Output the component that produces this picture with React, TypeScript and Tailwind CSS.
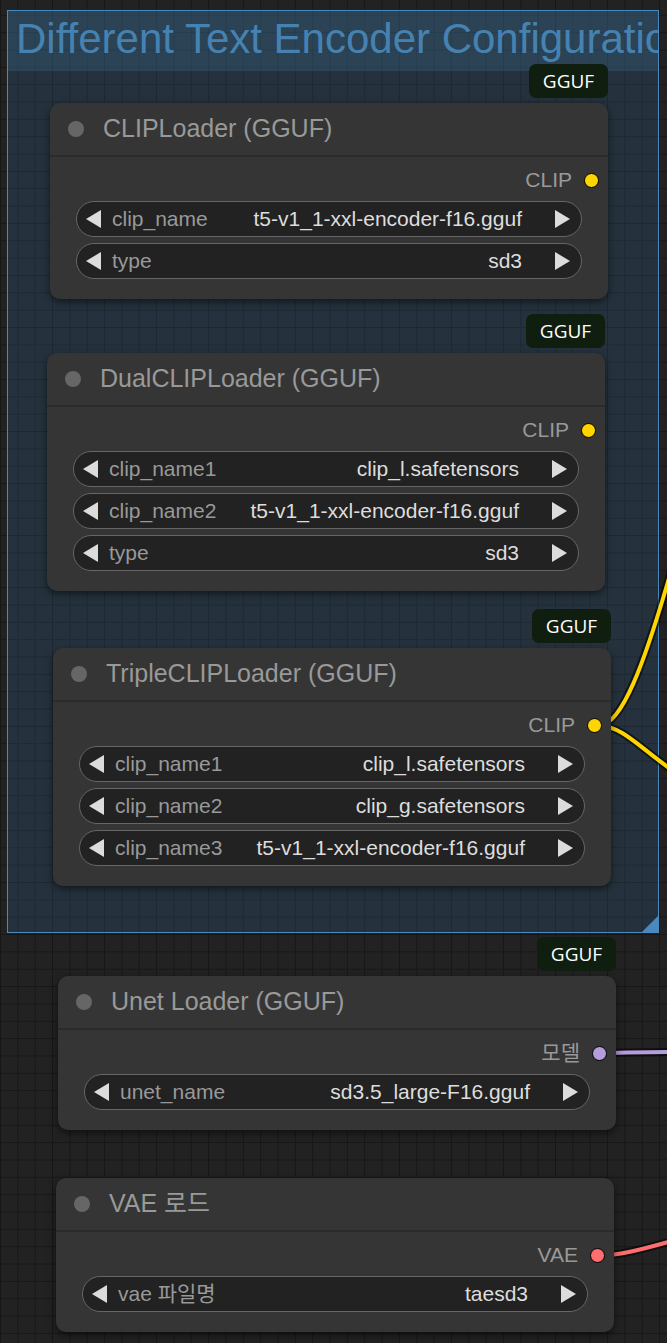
import React from "react";

interface Widget {
  label: string;
  value: string;
}

interface NodeProps {
  x: number;
  y: number;
  title: string;
  output: string;
  dotColor: string;
  widgets: Widget[];
  badge?: boolean;
}

const sans = "font-['Liberation_Sans','Noto_Sans_CJK_KR',Arial,sans-serif]";

function Arrow({ dir }: { dir: "left" | "right" }) {
  return (
    <svg width="17" height="20" viewBox="0 0 17 20" className="shrink-0">
      {dir === "left" ? <polygon points="16,1 16,19 1,10" fill="#dcdcdc" /> : <polygon points="1,1 1,19 16,10" fill="#dcdcdc" />}
    </svg>
  );
}

function Badge() {
  return (
    <div className="absolute right-0 -top-[39px] h-[34px] w-[79px] rounded-[7px] bg-[#0f1e0f] flex items-center justify-center text-white text-[19px] font-['Open_Sans',sans-serif]">
      GGUF
    </div>
  );
}

function Node({ x, y, title, output, dotColor, widgets, badge = true }: NodeProps) {
  return (
    <div
      className={`absolute w-[558px] rounded-[10px] bg-[#353535] shadow-[0_3px_8px_rgba(0,0,0,0.55)] ${sans}`}
      style={{ left: x, top: y }}
    >
      {badge && <Badge />}
      <div className="h-[54px] flex items-center pl-[18px] border-b-[2px] border-[#2b2b2b]">
        <div className="w-4 h-4 rounded-full bg-[#666]" />
        <span className="ml-[19px] text-[25px] text-[#999]">{title}</span>
      </div>
      <div className="pt-[11px] pb-[20px]">
        <div className="h-[24px] flex items-center justify-end pr-[9px]">
          <span className="text-[21px] text-[#999]">{output}</span>
          <div className="ml-[12px] w-[15px] h-[15px] rounded-full border-[1.5px] border-black" style={{ background: dotColor }} />
        </div>
        <div className="mt-[9px] flex flex-col gap-[6px]">
          {widgets.map((w) => (
            <div
              key={w.label}
              className="mx-[26px] h-[36px] rounded-full border border-[#666] bg-[#222] flex items-center pl-[8px] pr-[10px] text-[21px]"
            >
              <Arrow dir="left" />
              <span className="ml-[10px] text-[#999]">{w.label}</span>
              <span className="flex-1 text-right text-[#ddd] whitespace-nowrap">{w.value}</span>
              <span className="ml-[32px]">
                <Arrow dir="right" />
              </span>
            </div>
          ))}
        </div>
      </div>
    </div>
  );
}

export default function App() {
  const t5 = "t5-v1_1-xxl-encoder-f16.gguf";
  return (
    <div
      className="relative w-[667px] h-[1343px] overflow-hidden bg-[#222] [background-image:linear-gradient(to_right,#171717_1px,transparent_1px),linear-gradient(to_bottom,#171717_1px,transparent_1px)] [background-size:17.35px_17.35px] [background-position:0px_14.8px]"
    >
      {/* group */}
      <div className="absolute left-[7px] top-[10px] w-[652px] h-[923px] border-[1.5px] border-[#4a89bd] bg-[rgba(52,110,160,0.22)]">
        <div className="h-[60px] bg-[rgba(63,120,158,0.25)] overflow-hidden whitespace-nowrap">
          <span className={`block pl-[8px] pt-[3px] text-[42px] leading-[50px] text-[#4682b1] ${sans}`}>
            Different Text Encoder Configuration
          </span>
        </div>
        <svg className="absolute right-0 bottom-0" width="16" height="16" viewBox="0 0 16 16">
          <polygon points="16,0 16,16 0,16" fill="#4a89bd" />
        </svg>
      </div>

      {/* links */}
      <svg className="absolute inset-0 pointer-events-none" width="667" height="1343">
        <g fill="none" strokeLinecap="round">
          <path d="M600 725 C622 725 645 660 667 585 L680 540" stroke="rgba(0,0,0,0.55)" strokeWidth="8" />
          <path d="M600 726 C622 726 640 748 672 770" stroke="rgba(0,0,0,0.55)" strokeWidth="8" />
          <path d="M600 1053 C620 1053 640 1052 672 1052" stroke="rgba(0,0,0,0.55)" strokeWidth="8" />
          <path d="M598 1256 C620 1255 640 1250 672 1241" stroke="rgba(0,0,0,0.55)" strokeWidth="8" />
          <path d="M600 725 C622 725 645 660 667 585 L680 540" stroke="#ffd500" strokeWidth="4" />
          <path d="M600 726 C622 726 640 748 672 770" stroke="#ffd500" strokeWidth="4" />
          <path d="M600 1053 C620 1053 640 1052 672 1052" stroke="#b39ddb" strokeWidth="4" />
          <path d="M598 1256 C620 1255 640 1250 672 1241" stroke="#ff6e6e" strokeWidth="4" />
        </g>
      </svg>

      <Node
        x={50}
        y={103}
        title="CLIPLoader (GGUF)"
        output="CLIP"
        dotColor="#ffd500"
        widgets={[
          { label: "clip_name", value: t5 },
          { label: "type", value: "sd3" },
        ]}
      />
      <Node
        x={47}
        y={353}
        title="DualCLIPLoader (GGUF)"
        output="CLIP"
        dotColor="#ffd500"
        widgets={[
          { label: "clip_name1", value: "clip_l.safetensors" },
          { label: "clip_name2", value: t5 },
          { label: "type", value: "sd3" },
        ]}
      />
      <Node
        x={53}
        y={648}
        title="TripleCLIPLoader (GGUF)"
        output="CLIP"
        dotColor="#ffd500"
        widgets={[
          { label: "clip_name1", value: "clip_l.safetensors" },
          { label: "clip_name2", value: "clip_g.safetensors" },
          { label: "clip_name3", value: t5 },
        ]}
      />
      <Node
        x={58}
        y={976}
        title="Unet Loader (GGUF)"
        output="모델"
        dotColor="#b39ddb"
        widgets={[{ label: "unet_name", value: "sd3.5_large-F16.gguf" }]}
      />
      <Node
        x={56}
        y={1178}
        title="VAE 로드"
        output="VAE"
        dotColor="#ff6e6e"
        badge={false}
        widgets={[{ label: "vae 파일명", value: "taesd3" }]}
      />
    </div>
  );
}
